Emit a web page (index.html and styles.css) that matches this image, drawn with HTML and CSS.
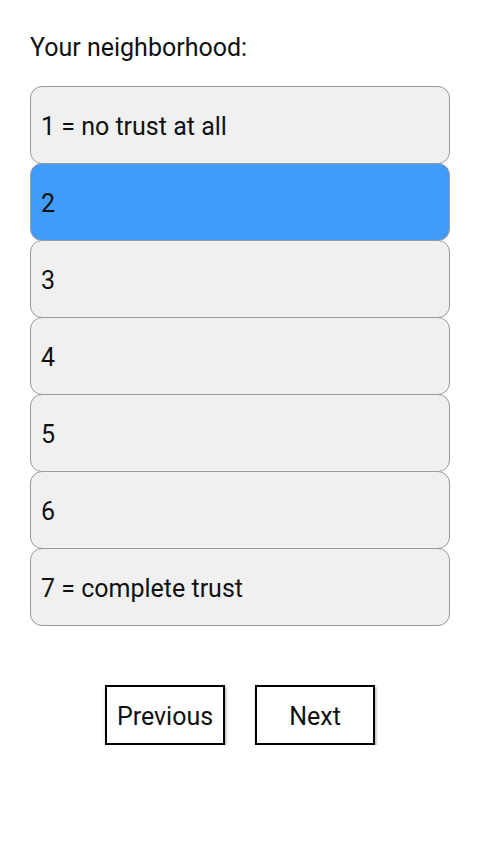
FILE: index.html
```html
<!DOCTYPE html>
<html>
<head>
    <title>Survey</title>
    <meta charset="utf-8">
    <link rel="stylesheet" href="styles.css">
</head>
<body>
    <div class="page">
        <div class="question">Your neighborhood:</div>

        <div class="options">
            <div class="option">1 = no trust at all</div>
            <div class="option selected">2</div>
            <div class="option">3</div>
            <div class="option">4</div>
            <div class="option">5</div>
            <div class="option">6</div>
            <div class="option">7 = complete trust</div>
        </div>

        <div class="nav">
            <button class="nav-btn">Previous</button>
            <button class="nav-btn">Next</button>
        </div>
    </div>
</body>
</html>
```

FILE: styles.css
```css
body {
    margin: 0;
    background-color: #fff;
    color: #111;
    font-family: 'Roboto', 'Liberation Sans', sans-serif;
}

.page {
    padding: 30px 30px 0 30px;
}

.question {
    font-size: 25px;
    line-height: 36px;
}

.options {
    display: flex;
    flex-direction: column;
    margin-top: 20px;
}

.option {
    display: flex;
    align-items: center;
    height: 76px;
    padding: 2px 10px 0 10px;
    box-sizing: border-box;
    height: 78px;
    background-color: #f0f0f0;
    border: 1px solid #9a9a9a;
    border-radius: 12px;
    margin-top: -1px;
    font-size: 25px;
}

.option:first-child {
    margin-top: 0;
}

.option.selected {
    background-color: #419bf9;
}

.nav {
    display: flex;
    justify-content: center;
    gap: 30px;
    margin-top: 59px;
}

.nav-btn {
    width: 120px;
    height: 60px;
    background-color: #fff;
    color: #111;
    border: 2px solid #000;
    border-radius: 0;
    box-shadow: 1px 2px 3px rgba(0, 0, 0, 0.35);
    font-family: 'Roboto', 'Liberation Sans', sans-serif;
    font-size: 25px;
    padding: 2px 0 0 0;
}
```
